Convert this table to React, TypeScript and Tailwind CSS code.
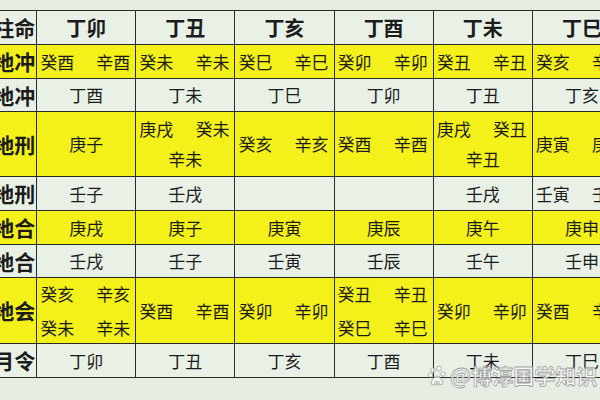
const Y = "bg-[#f4f01a]"
const W = "bg-[#e9f1e7]"

type Cell = string | string[][] | null

const cols = ["丁卯", "丁丑", "丁亥", "丁酉", "丁未", "丁巳"]

const rows: { label: string; bg: string; h: string; gap: string; cells: Cell[] }[] = [
  {
    label: "天克地冲",
    bg: Y,
    h: "h-[34px]",
    gap: "gap-[10px]",
    cells: [
      [["癸酉", "辛酉"]],
      [["癸未", "辛未"]],
      [["癸巳", "辛巳"]],
      [["癸卯", "辛卯"]],
      [["癸丑", "辛丑"]],
      [["癸亥", "辛亥"]],
    ],
  },
  { label: "天比地冲", bg: W, h: "h-[33px]", gap: "gap-[10px]", cells: ["丁酉", "丁未", "丁巳", "丁卯", "丁丑", "丁亥"] },
  {
    label: "天克地刑",
    bg: Y,
    h: "h-[65px]",
    gap: "gap-[10px]",
    cells: [
      "庚子",
      [["庚戌", "癸未"], ["辛未"]],
      [["癸亥", "辛亥"]],
      [["癸酉", "辛酉"]],
      [["庚戌", "癸丑"], ["辛丑"]],
      [["庚寅", "庚申"]],
    ],
  },
  { label: "天合地刑", bg: W, h: "h-[34px]", gap: "gap-[10px]", cells: ["壬子", "壬戌", null, null, "壬戌", [["壬寅", "壬申"]]] },
  { label: "天克地合", bg: Y, h: "h-[34px]", gap: "gap-[10px]", cells: ["庚戌", "庚子", "庚寅", "庚辰", "庚午", "庚申"] },
  { label: "天合地合", bg: W, h: "h-[33px]", gap: "gap-[10px]", cells: ["壬戌", "壬子", "壬寅", "壬辰", "壬午", "壬申"] },
  {
    label: "天克地会",
    bg: Y,
    h: "h-[66px]",
    gap: "gap-[14px]",
    cells: [
      [["癸亥", "辛亥"], ["癸未", "辛未"]],
      [["癸酉", "辛酉"]],
      [["癸卯", "辛卯"]],
      [["癸丑", "辛丑"], ["癸巳", "辛巳"]],
      [["癸卯", "辛卯"]],
      [["癸酉", "辛酉"]],
    ],
  },
  { label: "月令", bg: W, h: "h-[34px]", gap: "gap-[10px]", cells: ["丁卯", "丁丑", "丁亥", "丁酉", "丁未", "丁巳"] },
]

function CellBody({ cell, gap }: { cell: Cell; gap: string }) {
  if (!cell) return null
  if (typeof cell === "string") return <div className="text-center">{cell}</div>
  return (
    <div className={`flex flex-col ${gap}`}>
      {cell.map((line, i) =>
        line.length === 2 ? (
          <div key={i} className="flex justify-between pl-[3px] pr-[5px]">
            <span>{line[0]}</span>
            <span>{line[1]}</span>
          </div>
        ) : (
          <div key={i} className="text-center">
            {line[0]}
          </div>
        )
      )}
    </div>
  )
}

export default function App() {
  return (
    <div
      className="relative w-[600px] h-[400px] overflow-hidden bg-[#e6eee4] pt-[10px] text-[#1c1c1c]"
      style={{ fontFamily: '"Noto Sans CJK SC", "Noto Sans", sans-serif' }}
    >
      <table className="table-fixed border-collapse ml-[-64px] w-[696px]">
        <colgroup>
          <col className="w-[100px]" />
          {cols.map((c) => (
            <col key={c} className="w-[99px]" />
          ))}
        </colgroup>
        <thead>
          <tr className={`${W} h-[34px]`}>
            <th className="border border-[#2a2a2a] text-right pr-[1px] text-[21px] font-bold whitespace-nowrap">日柱命</th>
            {cols.map((c) => (
              <th key={c} className="border border-[#2a2a2a] text-center text-[20px] font-bold">
                {c}
              </th>
            ))}
          </tr>
        </thead>
        <tbody>
          {rows.map((r) => (
            <tr key={r.label} className={`${r.bg} ${r.h}`}>
              <td className="border border-[#2a2a2a] text-right pr-[1px] text-[21px] font-bold whitespace-nowrap leading-none">
                {r.label}
              </td>
              {r.cells.map((c, i) => (
                <td key={i} className="border border-[#2a2a2a] p-0 text-[17px] leading-[20px] align-middle">
                  <CellBody cell={c} gap={r.gap} />
                </td>
              ))}
            </tr>
          ))}
        </tbody>
      </table>

      <div className="absolute left-[428px] top-[360px] flex items-center gap-[4px] text-[21px] font-bold text-white/80 [-webkit-text-stroke:0.8px_#9a9a9a] whitespace-nowrap opacity-90">
        <svg width="18" height="22" viewBox="0 0 18 22" className="opacity-80">
          <circle cx="5" cy="5" r="2.4" fill="#fff" stroke="#9a9a9a" strokeWidth="1" />
          <circle cx="11" cy="3.5" r="2.4" fill="#fff" stroke="#9a9a9a" strokeWidth="1" />
          <circle cx="2.5" cy="10" r="2.2" fill="#fff" stroke="#9a9a9a" strokeWidth="1" />
          <circle cx="15" cy="9" r="2.2" fill="#fff" stroke="#9a9a9a" strokeWidth="1" />
          <path d="M3 19 Q4 12 9 11 Q14 12 15 19 Q9 21 3 19 Z" fill="#fff" stroke="#9a9a9a" strokeWidth="1" />
          <text x="9" y="18.5" fontSize="5" textAnchor="middle" fill="#9a9a9a" fontFamily="Liberation Sans, sans-serif">du</text>
        </svg>
        <span>@博淳国学知识</span>
      </div>
    </div>
  )
}
